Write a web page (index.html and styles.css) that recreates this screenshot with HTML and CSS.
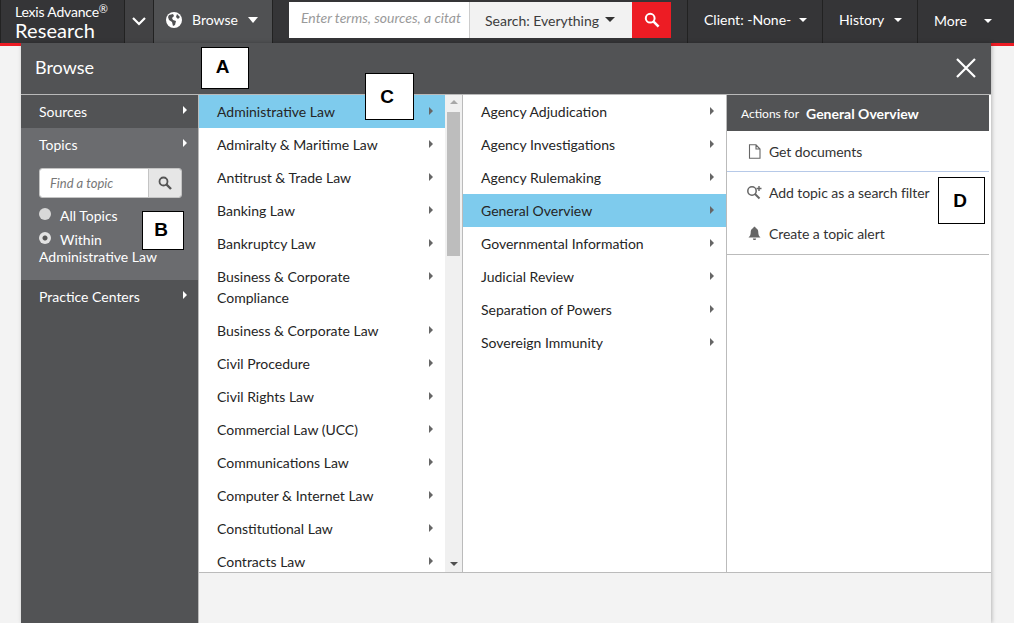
FILE: index.html
```html
<!DOCTYPE html>
<html lang="en">
<head>
<meta charset="utf-8">
<title>Lexis Advance Research</title>
<link rel="stylesheet" href="styles.css">
</head>
<body>
<header class="topbar">
  <div class="brand"><div class="brand-top">Lexis Advance<sup class="reg">®</sup></div><div class="brand-main">Research</div></div>
  <div class="tb chev"><svg width="16" height="10" viewBox="0 0 16 10"><path d="M2 2l6 6 6-6" fill="none" stroke="#fff" stroke-width="2.2"/></svg></div>
  <div class="tb browse">
    <svg width="16" height="16" viewBox="0 0 16 16"><circle cx="8" cy="8" r="8" fill="#fff"/><path d="M3 3l4-1 1 2-2 2 1 2 3 1-1 4-2 1-1-4-3-2-1-3zM11 2l3 3-2 2-2-2z" fill="#505153"/></svg>
    <span class="browse-label">Browse</span><i class="caret big"></i>
  </div>
  <div class="searchwrap">
    <div class="searchinput">Enter terms, sources, a citat</div>
    <div class="searchsel">Search: Everything<i class="caret dark"></i></div>
    <div class="searchbtn"><svg width="16" height="16" viewBox="0 0 16 16"><circle cx="6.2" cy="6.2" r="4.4" fill="none" stroke="#fff" stroke-width="2"/><path d="M9.6 9.6l5 5" stroke="#fff" stroke-width="2.6"/></svg></div>
  </div>
  <div class="tb client">Client: -None-<i class="caret tight"></i></div>
  <div class="tb history">History<i class="caret loose"></i></div>
  <div class="tb more">More<i class="caret wide"></i></div>
</header>
<div class="redline"></div>

<main class="panel">
  <div class="panel-head">
    <h1 class="panel-title">Browse</h1>
    <svg class="close" width="22" height="22" viewBox="0 0 22 22"><path d="M2 2l18 18M20 2L2 20" stroke="#fff" stroke-width="2.2"/></svg>
  </div>
  <div class="panel-body">
    <nav class="side">
      <div class="side-row">Sources<i class="arrow white"></i></div>
      <div class="side-open">
        <div class="side-row">Topics<i class="arrow white"></i></div>
        <div class="find">
          <div class="find-input">Find a topic</div>
          <div class="find-btn"><svg width="14" height="14" viewBox="0 0 14 14"><circle cx="5.5" cy="5.5" r="4" fill="none" stroke="#555" stroke-width="1.8"/><path d="M8.5 8.5l4.5 4.5" stroke="#555" stroke-width="2.4"/></svg></div>
        </div>
        <div class="radio-row"><span class="radio"></span>All Topics</div>
        <div class="radio-row second"><span class="radio on"></span>Within<br>Administrative Law</div>
      </div>
      <div class="side-row">Practice Centers<i class="arrow white"></i></div>
    </nav>
    <div class="content">
      <div class="columns">
        <ul class="col col-c">
          <li class="sel">Administrative Law<i class="arrow"></i></li>
          <li>Admiralty &amp; Maritime Law<i class="arrow"></i></li>
          <li>Antitrust &amp; Trade Law<i class="arrow"></i></li>
          <li>Banking Law<i class="arrow"></i></li>
          <li>Bankruptcy Law<i class="arrow"></i></li>
          <li class="two">Business &amp; Corporate Compliance<i class="arrow"></i></li>
          <li>Business &amp; Corporate Law<i class="arrow"></i></li>
          <li>Civil Procedure<i class="arrow"></i></li>
          <li>Civil Rights Law<i class="arrow"></i></li>
          <li>Commercial Law (UCC)<i class="arrow"></i></li>
          <li>Communications Law<i class="arrow"></i></li>
          <li>Computer &amp; Internet Law<i class="arrow"></i></li>
          <li>Constitutional Law<i class="arrow"></i></li>
          <li>Contracts Law<i class="arrow"></i></li>
        </ul>
        <div class="scroll">
          <i class="sc-up"></i>
          <div class="sc-thumb"></div>
          <i class="sc-down"></i>
        </div>
        <ul class="col col-d">
          <li>Agency Adjudication<i class="arrow"></i></li>
          <li>Agency Investigations<i class="arrow"></i></li>
          <li>Agency Rulemaking<i class="arrow"></i></li>
          <li class="sel">General Overview<i class="arrow"></i></li>
          <li>Governmental Information<i class="arrow"></i></li>
          <li>Judicial Review<i class="arrow"></i></li>
          <li>Separation of Powers<i class="arrow"></i></li>
          <li>Sovereign Immunity<i class="arrow"></i></li>
        </ul>
        <section class="actions">
          <div class="act-head"><span class="act-for">Actions for</span><strong class="act-name">General Overview</strong></div>
          <div class="act-row act-first">
            <svg width="14" height="15" viewBox="0 0 14 15"><path d="M2 .8h6.5L12.5 5v9.2H2z M8.5.8V5h4" fill="none" stroke="#666" stroke-width="1.1"/></svg>
            Get documents
          </div>
          <div class="act-group">
            <div class="act-row"><svg width="17" height="15" viewBox="0 0 17 15"><circle cx="6" cy="6" r="4.2" fill="none" stroke="#666" stroke-width="1.5"/><path d="M9 9l4.5 4.5" stroke="#666" stroke-width="2"/><path d="M13 1v5M10.5 3.5h5" stroke="#666" stroke-width="1.4"/></svg>Add topic as a search filter</div>
            <div class="act-row"><svg width="14" height="15" viewBox="0 0 14 15"><path d="M7 .8c.8 0 1.2.6 1.2 1.2 2 .6 2.6 2.4 2.600 4.4 0 2.4.8 3.800 2.200 5H1c1.400-1.200 2.200-2.600 2.200-5 0-2 .6-3.800 2.600-4.400C5.800 1.400 6.200.8 7 .8zM5.400 12.400h3.200C8.600 13.400 7.900 14 7 14s-1.600-.6-1.600-1.600z" fill="#666"/></svg>Create a topic alert</div>
          </div>
        </section>
      </div>
      <div class="panel-foot"></div>
    </div>
  </div>
</main>

<div class="tag tag-a">A</div>
<div class="tag tag-b">B</div>
<div class="tag tag-c">C</div>
<div class="tag tag-d">D</div>
</body>
</html>
```
FILE: styles.css
```css
* { box-sizing: border-box; }
html, body { margin: 0; padding: 0; }
body {
  width: 1014px; height: 623px; overflow: hidden; position: relative;
  background: #f3f3f3; font-family: Lato, "Liberation Sans", sans-serif;
  font-size: 14px; color: #252525;
}
ul { list-style: none; margin: 0; padding: 0; }
i { display: block; font-style: normal; }

.topbar { display: flex; height: 43px; background: #353537; color: #fff; }
.brand { width: 125px; padding: 4px 0 0 14px; border-right: 1px solid #222; border-left: 1px solid #222; }
.brand-top { font-size: 14px; line-height: 15px; letter-spacing: -.2px; white-space: nowrap; }
.reg { font-size: 11px; line-height: 0; vertical-align: 4px; }
.brand-main { font-size: 20px; line-height: 22px; letter-spacing: .1px; }
.tb { display: flex; align-items: center; border-right: 1px solid #222; font-size: 14px; white-space: nowrap; padding-bottom: 4px; }
.chev { width: 29px; justify-content: center; background: #424244; padding-bottom: 2px; }
.browse { width: 119px; background: #505153; padding-left: 12px; padding-bottom: 4px; }
.browse-label { margin: 0 10px; }
.searchwrap { display: flex; width: 415px; padding: 2px 16px 5px 16px; border-right: 1px solid #222; }
.searchinput { width: 180px; background: #fff; color: #9a9a9a; font-style: italic; padding: 0 12px; line-height: 32px; white-space: nowrap; overflow: hidden; }
.searchsel { width: 163px; background: #f2f2f2; color: #3c3c3c; border-left: 1px solid #ccc; display: flex; align-items: center; padding: 1px 0 0 15px; white-space: nowrap; }
.searchbtn { width: 39px; background: #ed1c24; display: flex; align-items: center; justify-content: center; }
.client { width: 135px; padding-left: 16px; }
.history { width: 95px; padding-left: 16px; }
.more { width: 96px; padding-left: 16px; border-right: 0; padding-bottom: 2px; }

.caret { width: 0; height: 0; border-left: 4px solid transparent; border-right: 4px solid transparent; border-top: 4px solid #fff; margin-left: 9px; }
.caret.big { border-left-width: 5px; border-right-width: 5px; border-top-width: 6px; margin-left: 0; }
.caret.dark { border-left-width: 5px; border-right-width: 5px; border-top: 5px solid #333; margin: -2px 0 0 6px; }
.caret.tight { margin-left: 8px; }
.caret.loose { margin-left: 10px; }
.caret.wide { margin-left: 17px; }

.redline { height: 3px; background: #ed1c24; }

.panel {
  position: absolute; left: 21px; top: 43px; width: 970px; height: 580px;
  background: #f3f3f3; box-shadow: 1px 0 4px rgba(0,0,0,.25);
  display: flex; flex-direction: column;
}
.panel-head { height: 52px; flex: none; background: #525355; border-bottom: 1px solid #b9b9b9; display: flex; align-items: center; justify-content: space-between; padding: 0 14px; }
.panel-title { margin: 0 0 3px; font-weight: 400; font-size: 18px; color: #fff; }
.close { margin-top: -1px; }
.panel-body { flex: 1; display: flex; min-height: 0; }

.side { width: 178px; flex: none; background: #525355; color: #fff; border-right: 1px solid #bbb; }
.side-row { height: 33px; padding: 0 11px 0 18px; display: flex; align-items: center; justify-content: space-between; }
.side-open { background: #6b6c6f; height: 152px; }
.arrow { width: 0; height: 0; border-top: 4px solid transparent; border-bottom: 4px solid transparent; border-left: 4px solid #666; flex: none; margin-top: -4px; }
.arrow.white { border-left-color: #fff; }

.find { display: flex; height: 30px; margin: 7px 0 0 18px; width: 143px; border: 1px solid #c4c4c4; border-radius: 3px; overflow: hidden; }
.find-input { flex: 1; background: #fff; color: #777; font-style: italic; font-size: 13px; line-height: 28px; padding-left: 10px; }
.find-btn { width: 33px; background: #e6e6e6; border-left: 1px solid #c4c4c4; display: flex; align-items: center; justify-content: center; }
.radio-row { padding-left: 18px; margin-top: 9px; line-height: 17px; }
.radio-row.second { margin-top: 7px; }
.radio { display: inline-block; width: 12px; height: 12px; border-radius: 50%; background: #d8d8d8; margin-right: 9px; position: relative; top: -3px; vertical-align: middle; }
.radio.on { background: radial-gradient(circle, #555 0 2px, #e2e2e2 3px); }

.content { flex: 1; display: flex; flex-direction: column; min-width: 0; }
.columns { height: 478px; flex: none; display: flex; background: #fff; border-bottom: 1px solid #bbb; overflow: hidden; }
.panel-foot { flex: 1; background: #f3f3f3; }

.col li { position: relative; padding: 7.5px 30px 7.5px 18px; line-height: 18px; display: flex; align-items: center; justify-content: space-between; color: #252525; }
.col .arrow { position: absolute; right: 12px; top: 12px; margin: 0; }
.col li.two { line-height: 21px; padding-top: 6px; padding-bottom: 6px; }
.col li.sel { background: #7ecbed; }
.col-c { width: 246px; flex: none; height: 477px; overflow: hidden; }
.col-d { width: 264px; flex: none; border-left: 1px solid #bbb; }
.scroll { width: 17px; flex: none; background: #f0f0f0; position: relative; padding-top: 17px; }
.sc-thumb { width: 13px; height: 144px; margin-left: 2px; background: #bdbdbd; }
.sc-up, .sc-down { position: absolute; left: 5px; width: 0; height: 0; border-left: 4px solid transparent; border-right: 4px solid transparent; }
.sc-up { top: 5px; border-bottom: 4px solid #a8a8a8; }
.sc-down { bottom: 6px; border-top: 4px solid #505050; }

.actions { width: 263px; flex: none; border-left: 1px solid #bbb; }
.act-head { height: 36px; background: #525355; color: #fff; display: flex; align-items: center; padding-left: 14px; }
.act-for { font-size: 12px; margin-right: 7px; }
.act-name { font-size: 14px; font-weight: 700; }
.act-row { height: 41px; display: flex; align-items: center; gap: 6px; padding-left: 20px; color: #333; white-space: nowrap; letter-spacing: -.07px; }
.act-row svg { width: 17px; flex: none; margin-left: -1px; }
.act-first { border-bottom: 1px solid #b6c9e8; }
.act-group { border-bottom: 1px solid #bbb; height: 83px; }

.tag {
  position: absolute; background: #fff; border: 1px solid #000; color: #000;
  font-family: "Liberation Sans", sans-serif; font-weight: 700; font-size: 19px;
  display: flex; align-items: center; justify-content: center;
}
.tag-a { left: 201px; top: 47px; width: 48px; height: 42px; padding: 0 5px 2px 0; }
.tag-b { left: 142px; top: 211px; width: 42px; height: 39px; padding: 0 4px 2px 0; }
.tag-c { left: 365px; top: 73px; width: 49px; height: 47px; padding-right: 5px; }
.tag-d { left: 938px; top: 177px; width: 47px; height: 47px; padding-right: 3px; }
```
